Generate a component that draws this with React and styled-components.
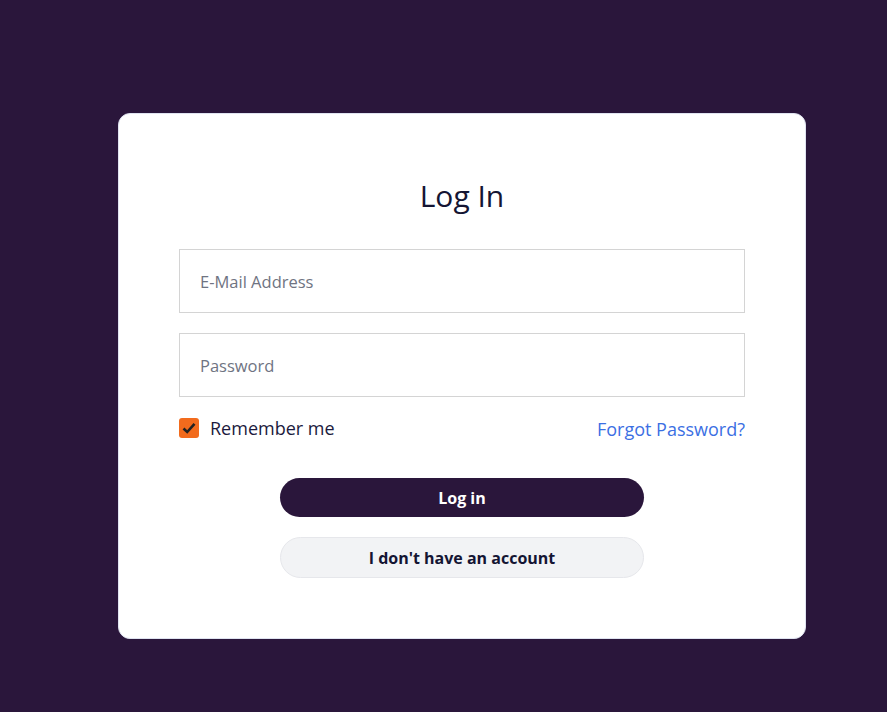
import React, { useState } from 'react';
import styled, { createGlobalStyle } from 'styled-components';

const GlobalStyle = createGlobalStyle`
  body {
    margin: 0;
    background: #2a163b;
    font-family: 'Open Sans', 'Liberation Sans', sans-serif;
  }
`;

const Page = styled.div`
  min-height: 712px;
  box-sizing: border-box;
  padding: 113px 0 0 118px;
  display: flex;
  align-items: flex-start;
`;

const Card = styled.form`
  width: 688px;
  height: 526px;
  box-sizing: border-box;
  background: #fff;
  border: 1px solid #dfe3f0;
  border-radius: 12px;
  padding: 62px 60px 0 60px;
  display: flex;
  flex-direction: column;
`;

const Title = styled.h1`
  margin: 0 0 33px;
  text-align: center;
  font-size: 30px;
  font-weight: 400;
  line-height: 40px;
  color: #141533;
`;

const Input = styled.input`
  width: 100%;
  height: 64px;
  box-sizing: border-box;
  border: 1px solid #d4d4d4;
  border-radius: 0;
  outline: none;
  padding: 0 20px;
  font-family: inherit;
  font-size: 16.5px;
  color: #141533;

  & + & {
    margin-top: 20px;
  }

  &::placeholder {
    color: #6f7482;
  }
`;

const Options = styled.div`
  display: flex;
  align-items: center;
  justify-content: space-between;
  margin-top: 21px;
  height: 20px;
`;

const Check = styled.label`
  display: flex;
  align-items: center;
  gap: 11px;
  font-size: 18px;
  color: #1b1a3d;
  cursor: pointer;
`;

const Box = styled.span`
  width: 20px;
  height: 20px;
  border-radius: 3px;
  background: ${(props) => (props.checked ? '#f26b1d' : '#fff')};
  border: ${(props) => (props.checked ? 'none' : '1px solid #999')};
  display: flex;
  align-items: center;
  justify-content: center;
`;

const Link = styled.a`
  font-size: 18px;
  color: #3b6fe3;
  text-decoration: none;
  margin-top: 2px;
`;

const Buttons = styled.div`
  display: flex;
  flex-direction: column;
  align-items: center;
  gap: 20px;
  margin-top: 40px;
`;

const Button = styled.button`
  width: 364px;
  height: ${(props) => (props.secondary ? '41px' : '39px')};
  border-radius: 999px;
  font-family: inherit;
  font-size: 16px;
  font-weight: 700;
  cursor: pointer;
  background: ${(props) => (props.secondary ? '#f2f3f5' : '#2a163b')};
  color: ${(props) => (props.secondary ? '#141533' : '#fff')};
  border: ${(props) => (props.secondary ? '1px solid #e6e7eb' : 'none')};
`;

export default function App() {
  const [remember, setRemember] = useState(true);

  return (
    <>
      <GlobalStyle />
      <Page>
        <Card onSubmit={(e) => e.preventDefault()}>
          <Title>Log In</Title>
          <Input type="email" placeholder="E-Mail Address" />
          <Input type="password" placeholder="Password" />
          <Options>
            <Check onClick={() => setRemember(!remember)}>
              <Box checked={remember}>
                {remember && (
                  <svg width="16" height="16" viewBox="0 0 16 16">
                    <path d="M2.5 8.5 L6.2 12 L13.5 3.8" fill="none" stroke="#222" strokeWidth="2.6" />
                  </svg>
                )}
              </Box>
              Remember me
            </Check>
            <Link href="#">Forgot Password?</Link>
          </Options>
          <Buttons>
            <Button type="submit">Log in</Button>
            <Button type="button" secondary>
              I don't have an account
            </Button>
          </Buttons>
        </Card>
      </Page>
    </>
  );
}
